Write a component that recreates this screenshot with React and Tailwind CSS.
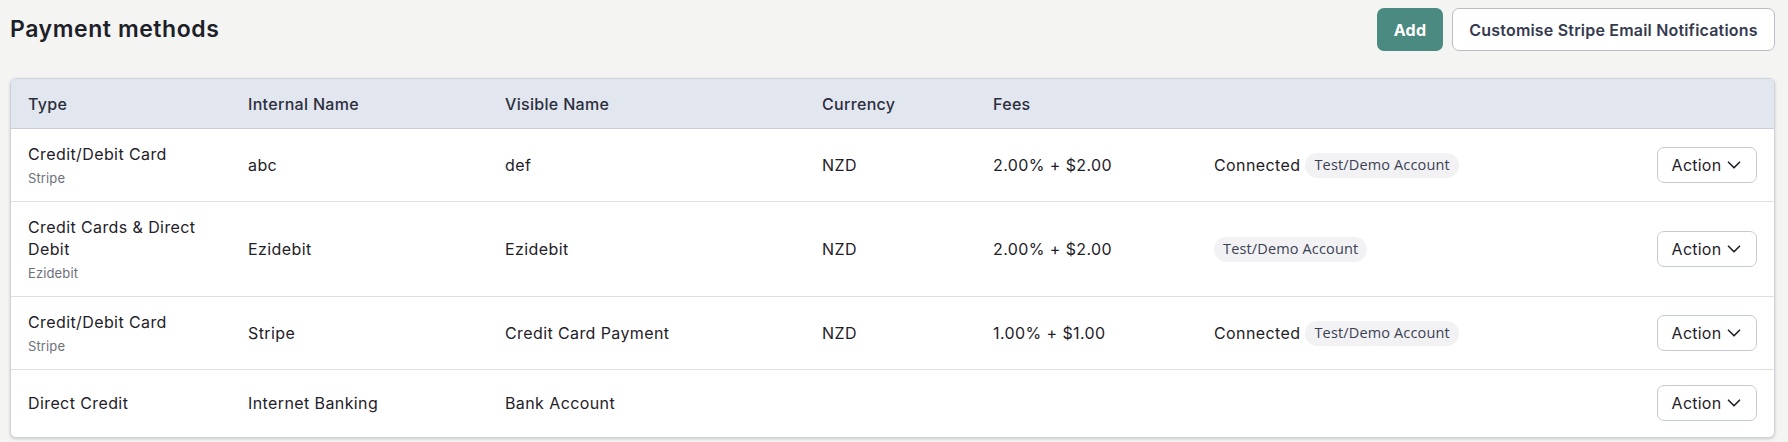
import React from "react";
import { ChevronDown } from "lucide-react";

const methods = [
  {
    type: "Credit/Debit Card",
    provider: "Stripe",
    internal: "abc",
    visible: "def",
    currency: "NZD",
    fees: "2.00% + $2.00",
    connected: true,
    demo: true,
  },
  {
    type: "Credit Cards & Direct Debit",
    provider: "Ezidebit",
    internal: "Ezidebit",
    visible: "Ezidebit",
    currency: "NZD",
    fees: "2.00% + $2.00",
    connected: false,
    demo: true,
  },
  {
    type: "Credit/Debit Card",
    provider: "Stripe",
    internal: "Stripe",
    visible: "Credit Card Payment",
    currency: "NZD",
    fees: "1.00% + $1.00",
    connected: true,
    demo: true,
  },
  {
    type: "Direct Credit",
    provider: null,
    internal: "Internet Banking",
    visible: "Bank Account",
    currency: "",
    fees: "",
    connected: false,
    demo: false,
  },
];

const cols =
  "grid grid-cols-[220px_257px_317px_171px_221px_1fr_140px] items-center";

function Badge({ children }) {
  return (
    <span className="inline-flex h-[25px] items-center rounded-full bg-[#f2f2f4] px-[9px] font-['Open_Sans',sans-serif] text-[14.5px] tracking-[0.01em] text-[#3a4152]">
      {children}
    </span>
  );
}

function ActionButton() {
  return (
    <button className="flex h-[36px] w-[100px] items-center justify-center gap-[2px] rounded-[7px] border border-[#c6cad4] bg-white pl-[3px] text-[16px] tracking-[0.015em] text-[#1f2129]">
      Action
      <ChevronDown size={22} strokeWidth={1.8} />
    </button>
  );
}

export default function App() {
  return (
    <div className="min-h-screen bg-[#f4f4f3] pl-[10px] pr-[13px] pt-[8px] font-['Inter',sans-serif] text-[#1f2129]">
      <div className="flex h-[43px] items-center justify-between">
        <h1 className="text-[23px] font-semibold tracking-[0.025em] text-[#1d1f29]">Payment methods</h1>
        <div className="flex gap-[9px]">
          <button className="h-[43px] w-[66px] rounded-[7px] bg-[#4a8a81] text-[16px] font-bold tracking-[0.02em] text-white">
            Add
          </button>
          <button className="h-[43px] w-[323px] rounded-[7px] border border-[#b9bdc8] bg-white text-[16px] font-semibold tracking-[0.012em] text-[#363a4f]">
            Customise Stripe Email Notifications
          </button>
        </div>
      </div>

      <div className="mt-[27px] overflow-hidden rounded-[6px] border border-[#cfd3dc] bg-white shadow-[0_1px_3px_rgba(0,0,0,0.18)]">
        <div className={`${cols} h-[50px] border-b border-[#c8cdd8] bg-[#e2e6ee] text-[16px] font-medium tracking-[0.02em] text-[#2b2e3d]`}>
          <div className="pl-[17px]">Type</div>
          <div className="pl-[17px]">Internal Name</div>
          <div className="pl-[17px]">Visible Name</div>
          <div className="pl-[17px]">Currency</div>
          <div className="pl-[17px]">Fees</div>
          <div />
          <div />
        </div>

        {methods.map((m, i) => (
          <div
            key={i}
            className={`${cols} text-[16px] leading-[22px] tracking-[0.025em] ${
              i < methods.length - 1 ? "border-b border-[#dcdfe6] py-[14px]" : "pt-[15px] pb-[16px]"
            }`}
          >
            <div className="pl-[17px] pr-[12px]">
              <div>{m.type}</div>
              {m.provider && (
                <div className="mt-[4px] text-[13px] leading-[18px] tracking-[0.01em] text-[#6c6f7a]">{m.provider}</div>
              )}
            </div>
            <div className="pl-[17px]">{m.internal}</div>
            <div className="pl-[17px]">{m.visible}</div>
            <div className="pl-[17px]">{m.currency}</div>
            <div className="pl-[17px]">{m.fees}</div>
            <div className="flex items-center gap-[5px] pl-[17px]">
              {m.connected && <span>Connected</span>}
              {m.demo && <Badge>Test/Demo Account</Badge>}
            </div>
            <div className="flex justify-end pr-[17px]">
              <ActionButton />
            </div>
          </div>
        ))}
      </div>
    </div>
  );
}
